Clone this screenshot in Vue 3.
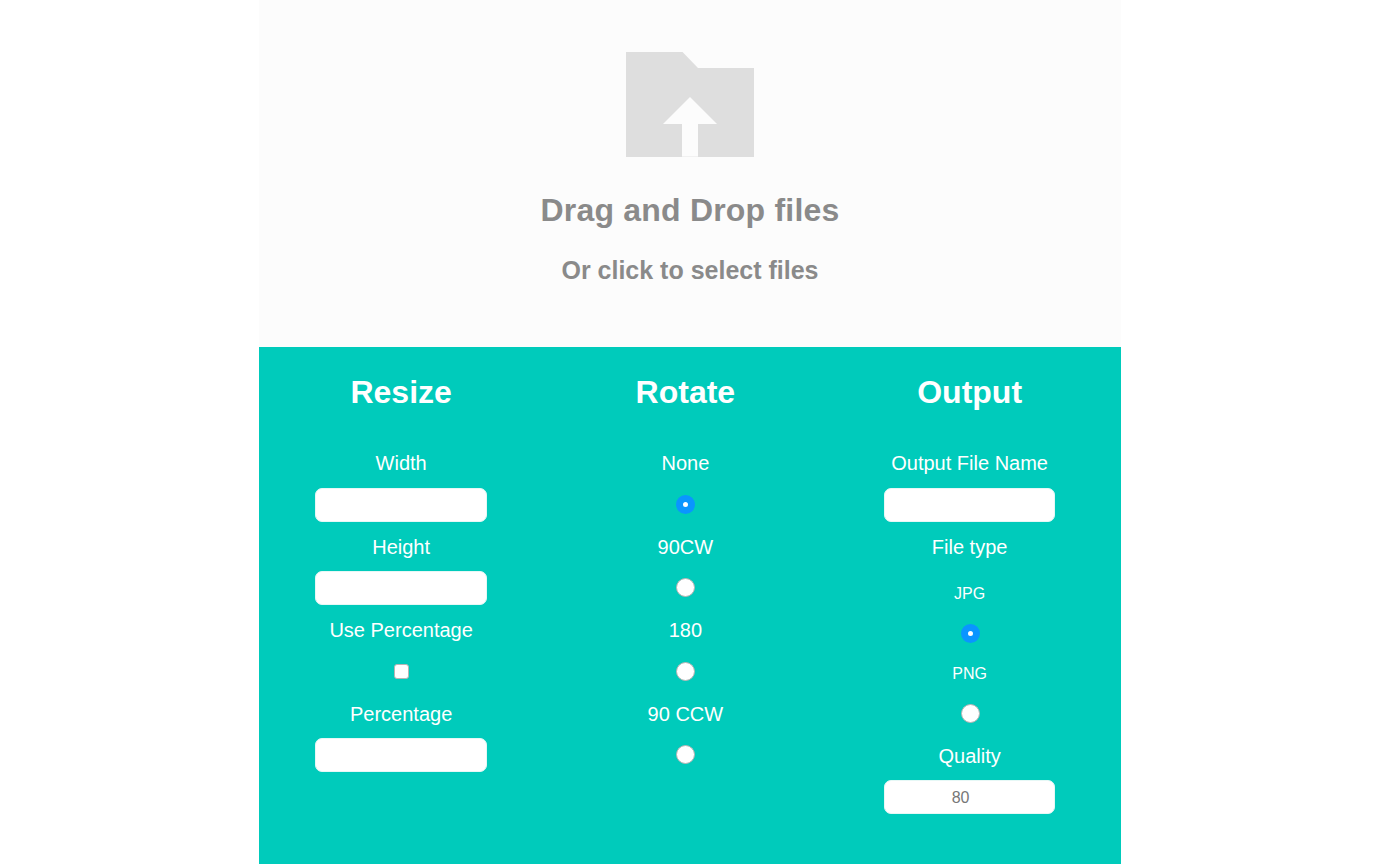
<template>
  <div class="wrap">
    <div class="page">
      <div class="dropzone">
        <svg class="folder" viewBox="0 0 128 105" width="128" height="105">
          <path d="M0 0H56.5L72 16H128V105H72V72H91L64 45L37 72H56V105H0Z" fill="#dedede" />
          <rect x="56" y="104" width="16" height="1" fill="#f1f1f1" />
        </svg>
        <h2 class="drop-title">Drag and Drop files</h2>
        <h3 class="drop-sub">Or click to select files</h3>
      </div>

      <div class="settings">
        <section class="col">
          <h2 class="col-title">Resize</h2>
          <div class="field">
            <label>Width</label>
            <div class="control"><input v-model="width" class="text-input" type="text" /></div>
          </div>
          <div class="field">
            <label>Height</label>
            <div class="control"><input v-model="height" class="text-input" type="text" /></div>
          </div>
          <div class="field">
            <label>Use Percentage</label>
            <div class="control"><input v-model="usePercentage" class="check" type="checkbox" /></div>
          </div>
          <div class="field">
            <label>Percentage</label>
            <div class="control"><input v-model="percentage" class="text-input" type="text" /></div>
          </div>
        </section>

        <section class="col">
          <h2 class="col-title">Rotate</h2>
          <div v-for="opt in rotations" :key="opt" class="field">
            <label>{{ opt }}</label>
            <div class="control">
              <input v-model="rotation" class="radio" type="radio" name="rotate" :value="opt" />
            </div>
          </div>
        </section>

        <section class="col">
          <h2 class="col-title">Output</h2>
          <div class="field">
            <label>Output File Name</label>
            <div class="control"><input v-model="fileName" class="text-input" type="text" /></div>
          </div>
          <div class="field">
            <label>File type</label>
            <div class="types">
              <div v-for="t in fileTypes" :key="t" class="type">
                <label class="small">{{ t }}</label>
                <div class="control">
                  <input v-model="fileType" class="radio" type="radio" name="filetype" :value="t" />
                </div>
              </div>
            </div>
          </div>
          <div class="field">
            <label>Quality</label>
            <div class="control">
              <input v-model="quality" class="text-input quality" type="text" />
            </div>
          </div>
        </section>
      </div>
    </div>
  </div>
</template>

<script setup>
import { ref } from 'vue'

const rotations = ['None', '90CW', '180', '90 CCW']
const fileTypes = ['JPG', 'PNG']

const width = ref('')
const height = ref('')
const usePercentage = ref(false)
const percentage = ref('')
const rotation = ref('None')
const fileName = ref('')
const fileType = ref('JPG')
const quality = ref('80')
</script>

<style>
html, body {
  margin: 0;
  background: #fff;
}
</style>

<style scoped>
/* the page is centred in 1380px, not the full window */
.wrap {
  padding-right: 20px;
}

.page {
  width: 862px;
  min-height: 864px;
  margin: 0 auto;
  display: flex;
  flex-direction: column;
  font-family: "Liberation Sans", Arial, sans-serif;
}

.dropzone {
  height: 346.5px;
  box-sizing: border-box;
  padding-top: 52px;
  background: #fcfcfc;
  text-align: center;
  color: #8a8a8a;
}

.folder {
  display: block;
  margin: 0 auto;
}

.drop-title {
  margin: 35px 0 0;
  font-size: 32px;
  line-height: 36px;
  font-weight: 700;
  letter-spacing: 0.2px;
}

.drop-sub {
  margin: 27px 0 0;
  font-size: 25px;
  line-height: 30px;
  font-weight: 700;
}

.settings {
  flex: 1;
  display: grid;
  grid-template-columns: repeat(3, 284.25px);
  background: #00cbbb;
  color: #fff;
  text-align: center;
}

.col-title {
  margin: 24px 0 36.5px;
  font-size: 32px;
  line-height: 42px;
  font-weight: 700;
}

.field label {
  display: block;
  font-size: 20px;
  line-height: 28px;
}

.control {
  height: 34px;
  margin: 10.5px 0 11.1px;
  display: flex;
  align-items: center;
  justify-content: center;
}

.types {
  padding: 20px 0 1px;
}

.field .small {
  font-size: 16px;
  line-height: 26px;
}

.type .control {
  margin: 10px 0;
}

.text-input {
  width: 171.5px;
  height: 34px;
  box-sizing: border-box;
  border: 1px solid #e6f8f6;
  border-radius: 7px;
  background: #fff;
  padding: 1px 18px 0 0;
  text-align: center;
  font-family: inherit;
  font-size: 16px;
  color: #777;
  outline: none;
}

.check {
  appearance: none;
  width: 15px;
  height: 15px;
  margin: 0;
  background: #fff;
  border: 1px solid #b9b4b4;
  border-radius: 3px;
}

.radio {
  appearance: none;
  width: 19px;
  height: 19px;
  margin: 0 0 1px 1px;
  background: #fff;
  border: 1px solid #b9b4b4;
  border-radius: 50%;
}

.radio:checked {
  background: #fff;
  border: 7px solid #0a95ff;
}

.type .radio {
  margin: 0 0 0 1px;
}
</style>
